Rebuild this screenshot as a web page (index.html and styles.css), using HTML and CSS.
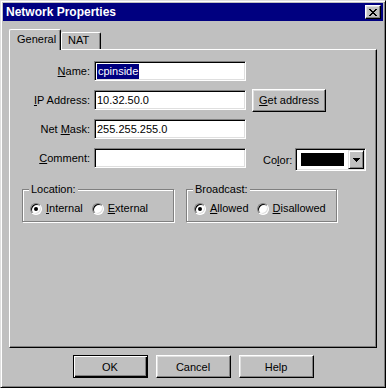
FILE: index.html
```html
<!DOCTYPE html>
<html>
	<head>
		<meta charset="UTF-8">
		<title>Network Properties</title>
		<link rel="stylesheet" href="styles.css">
	</head>
	<body>
		<div class="window">
			<div class="titlebar">
				<span class="title">Network Properties</span>
				<span class="close">
					<svg width="8" height="7" viewBox="0 0 8 7" shape-rendering="crispEdges">
						<path d="M0 0h2v1h-2zM6 0h2v1h-2zM1 1h2v1h-2zM5 1h2v1h-2zM2 2h4v1h-4zM3 3h2v1h-2zM2 4h4v1h-4zM1 5h2v1h-2zM5 5h2v1h-2zM0 6h2v1h-2zM6 6h2v1h-2z" fill="#000"/>
					</svg>
				</span>
			</div>

			<div class="tabs">
				<div class="tab tab-on">General</div>
				<div class="tab">NAT</div>
			</div>

			<div class="panel">
				<div class="form">
					<label class="lbl"><u>N</u>ame:</label>
					<div class="field"><span class="sel">cpinside</span></div>
					<div></div>

					<label class="lbl"><u>I</u>P Address:</label>
					<div class="field">10.32.50.0</div>
					<div class="btn btn-get"><span><u>G</u>et address</span></div>

					<label class="lbl">Net <u>M</u>ask:</label>
					<div class="field">255.255.255.0</div>
					<div></div>

					<label class="lbl"><u>C</u>omment:</label>
					<div class="field"></div>
					<div class="color">
						<span>Co<u>l</u>or:</span>
						<div class="combo">
							<span class="swatch"></span>
							<span class="drop">
								<svg width="7" height="4" viewBox="0 0 7 4" shape-rendering="crispEdges">
									<path d="M0 0h7v1h-7zM1 1h5v1h-5zM2 2h3v1h-3zM3 3h1v1h-1z" fill="#000"/>
								</svg>
							</span>
						</div>
					</div>
				</div>

				<div class="groups">
					<fieldset class="group group-loc">
						<legend>Location:</legend>
						<div class="options">
							<span class="opt"><span class="radio on"></span><span><u>I</u>nternal</span></span>
							<span class="opt"><span class="radio"></span><span><u>E</u>xternal</span></span>
						</div>
					</fieldset>
					<fieldset class="group group-bc">
						<legend>Broadcast:</legend>
						<div class="options">
							<span class="opt"><span class="radio on"></span><span><u>A</u>llowed</span></span>
							<span class="opt"><span class="radio"></span><span><u>D</u>isallowed</span></span>
						</div>
					</fieldset>
				</div>
			</div>

			<div class="buttons">
				<div class="btn btn-wide btn-default">OK</div>
				<div class="btn btn-wide">Cancel</div>
				<div class="btn btn-wide">Help</div>
			</div>
		</div>
	</body>
</html>
```
FILE: styles.css
```css
* {
	margin: 0;
	padding: 0;
	box-sizing: border-box;
}

body {
	font: 11px "Liberation Sans", Arial, sans-serif;
	color: #000;
	background: #c0c0c0;
}

.window {
	width: 386px;
	height: 388px;
	padding: 2px;
	background: #c0c0c0;
	border: 1px solid;
	border-color: #dfdfdf #000 #000 #dfdfdf;
	box-shadow: inset 1px 1px #fff, inset -1px -1px #808080;
	display: flex;
	flex-direction: column;
}

/* 标题栏 */
.titlebar {
	height: 18px;
	padding: 0 2px 0 3px;
	background: #000080;
	color: #fff;
	font-size: 12px;
	font-weight: bold;
	display: flex;
	align-items: center;
	justify-content: space-between;
}

.close {
	width: 16px;
	height: 14px;
	background: #c0c0c0;
	border: 1px solid;
	border-color: #fff #000 #000 #fff;
	box-shadow: inset -1px -1px #808080, inset 1px 1px #dfdfdf;
	display: flex;
	align-items: center;
	justify-content: center;
}

/* 选项卡 */
.tabs {
	margin-top: 8px;
	padding-left: 6px;
	height: 20px;
	display: flex;
	align-items: flex-end;
}

.tab {
	height: 17px;
	padding: 0 11px 0 6px;
	border-top: 1px solid #fff;
	border-left: 1px solid #fff;
	border-right: 1px solid #000;
	border-radius: 2px 2px 0 0;
	box-shadow: inset -1px 0 #808080;
	line-height: 15px;
	background: #c0c0c0;
}

.tab-on {
	height: 21px;
	width: 52px;
	padding: 0 0 0 7px;
	margin-bottom: -1px;
	line-height: 18px;
	position: relative;
	z-index: 1;
}

.panel {
	height: 299px;
	margin: 0 6px;
	border: 1px solid;
	border-color: #fff #000 #000 #fff;
	box-shadow: inset -1px -1px #808080;
	padding-top: 11px;
}

/* 表单 */
.form {
	display: grid;
	grid-template-columns: 80px 152px auto;
	grid-auto-rows: 20px;
	column-gap: 4px;
	row-gap: 9px;
	align-items: center;
}

.lbl {
	text-align: right;
}

.field {
	height: 20px;
	background: #fff;
	border: 1px solid;
	border-color: #808080 #fff #fff #808080;
	box-shadow: inset 1px 1px #000, inset -1px -1px #dfdfdf;
	padding: 0 2px;
	line-height: 18px;
	white-space: nowrap;
}

.sel {
	background: #000080;
	color: #fff;
	padding: 1px 1px 2px;
}

.btn {
	height: 23px;
	background: #c0c0c0;
	border: 1px solid;
	border-color: #fff #000 #000 #fff;
	box-shadow: inset -1px -1px #808080, inset 1px 1px #dfdfdf;
	display: flex;
	align-items: center;
	justify-content: center;
}

.btn-get {
	width: 74px;
	margin-left: 2px;
}

.color {
	align-self: start;
	margin-left: 13px;
	display: flex;
	align-items: center;
	gap: 3px;
}

.combo {
	width: 71px;
	height: 23px;
	background: #fff;
	border: 1px solid;
	border-color: #808080 #fff #fff #808080;
	box-shadow: inset 1px 1px #000, inset -1px -1px #dfdfdf;
	padding: 1px;
	display: flex;
	align-items: center;
}

.swatch {
	width: 43px;
	height: 13px;
	margin-left: 4px;
	background: #000;
}

.drop {
	width: 16px;
	height: 19px;
	margin-left: auto;
	background: #c0c0c0;
	border: 1px solid;
	border-color: #dfdfdf #000 #000 #dfdfdf;
	box-shadow: inset 1px 1px #fff, inset -1px -1px #808080;
	display: flex;
	align-items: center;
	justify-content: center;
}

/* 分组框 */
.groups {
	margin-top: 15px;
	padding-left: 12px;
	display: flex;
	gap: 12px;
}

.group {
	border: 1px solid #808080;
	box-shadow: inset 1px 1px #fff, 1px 1px #fff;
	padding: 0 6px 6px;
}

.group-loc {
	width: 152px;
}

.group-bc {
	width: 151px;
}

.group legend {
	padding: 0 2px;
	line-height: 13px;
	background: #c0c0c0;
}

.options {
	margin-top: 6px;
	margin-left: 1px;
	display: flex;
	gap: 9px;
}

.group-bc .options {
	gap: 8px;
}

.opt {
	display: flex;
	align-items: center;
	gap: 4px;
	line-height: 13px;
}

.radio {
	width: 12px;
	height: 12px;
	border-radius: 50%;
	background: #fff;
	border: 1px solid;
	border-color: #808080 #fff #fff #808080;
	box-shadow: inset 1px 1px #000, inset -1px -1px #dfdfdf;
	display: flex;
	align-items: center;
	justify-content: center;
}

.radio.on::after {
	content: "";
	width: 4px;
	height: 4px;
	border-radius: 50%;
	background: #000;
}

/* 底部按钮 */
.buttons {
	margin-top: 7px;
	display: flex;
	justify-content: center;
	gap: 8px;
}

.btn-wide {
	width: 75px;
}

.btn-default {
	border-color: #000;
	box-shadow: inset 1px 1px #fff, inset -1px -1px #000, inset -2px -2px #808080;
}
```
